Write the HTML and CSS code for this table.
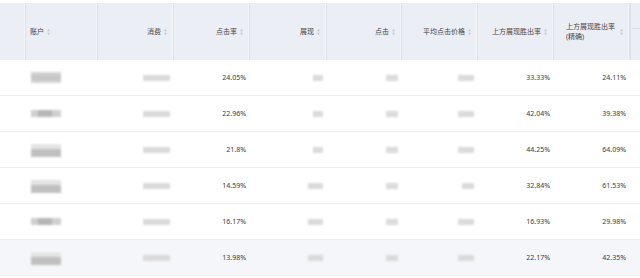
FILE: index.html
```html
<!DOCTYPE html>
<html lang="zh">
<head>
<meta charset="utf-8">
<link rel="stylesheet" href="styles.css">
</head>
<body>
<div class="table">
  <div class="row head">
    <div class="hc"></div>
    <div class="hc left"><span>账户</span><svg class="sort" viewBox="0 0 4 8"><path d="M2 0 L4 3 L0 3Z M2 8 L4 5 L0 5Z"/></svg></div>
    <div class="hc"><span>消费</span><svg class="sort" viewBox="0 0 4 8"><path d="M2 0 L4 3 L0 3Z M2 8 L4 5 L0 5Z"/></svg></div>
    <div class="hc"><span>点击率</span><svg class="sort" viewBox="0 0 4 8"><path d="M2 0 L4 3 L0 3Z M2 8 L4 5 L0 5Z"/></svg></div>
    <div class="hc"><span>展现</span><svg class="sort" viewBox="0 0 4 8"><path d="M2 0 L4 3 L0 3Z M2 8 L4 5 L0 5Z"/></svg></div>
    <div class="hc"><span>点击</span><svg class="sort" viewBox="0 0 4 8"><path d="M2 0 L4 3 L0 3Z M2 8 L4 5 L0 5Z"/></svg></div>
    <div class="hc"><span>平均点击价格</span><svg class="sort" viewBox="0 0 4 8"><path d="M2 0 L4 3 L0 3Z M2 8 L4 5 L0 5Z"/></svg></div>
    <div class="hc"><span>上方展现胜出率</span><svg class="sort" viewBox="0 0 4 8"><path d="M2 0 L4 3 L0 3Z M2 8 L4 5 L0 5Z"/></svg></div>
    <div class="hc"><span class="two">上方展现胜出率<br>(精确)</span><svg class="sort wide" viewBox="0 0 4 8"><path d="M2 0 L4 3 L0 3Z M2 8 L4 5 L0 5Z"/></svg></div>
    <div class="hc edge"><div class="edge-top"></div></div>
  </div>

  <div class="row">
    <div class="c"></div>
    <div class="c left"><span class="acc a1"></span></div>
    <div class="c"><span class="blur w27"></span></div>
    <div class="c">24.05%</div>
    <div class="c"><span class="blur w11"></span></div>
    <div class="c"><span class="blur w13"></span></div>
    <div class="c"><span class="blur w17"></span></div>
    <div class="c">33.33%</div>
    <div class="c">24.11%</div>
    <div class="c"></div>
  </div>
  <div class="row">
    <div class="c"></div>
    <div class="c left"><span class="acc a2"></span></div>
    <div class="c"><span class="blur w27"></span></div>
    <div class="c">22.96%</div>
    <div class="c"><span class="blur w11"></span></div>
    <div class="c"><span class="blur w13"></span></div>
    <div class="c"><span class="blur w17"></span></div>
    <div class="c">42.04%</div>
    <div class="c">39.38%</div>
    <div class="c"></div>
  </div>
  <div class="row">
    <div class="c"></div>
    <div class="c left"><span class="acc a3"></span></div>
    <div class="c"><span class="blur w27"></span></div>
    <div class="c">21.8%</div>
    <div class="c"><span class="blur w11"></span></div>
    <div class="c"><span class="blur w13"></span></div>
    <div class="c"><span class="blur w17"></span></div>
    <div class="c">44.25%</div>
    <div class="c">64.09%</div>
    <div class="c"></div>
  </div>
  <div class="row">
    <div class="c"></div>
    <div class="c left"><span class="acc a3"></span></div>
    <div class="c"><span class="blur w27"></span></div>
    <div class="c">14.59%</div>
    <div class="c"><span class="blur w15"></span></div>
    <div class="c"><span class="blur w13"></span></div>
    <div class="c"><span class="blur w13"></span></div>
    <div class="c">32.84%</div>
    <div class="c">61.53%</div>
    <div class="c"></div>
  </div>
  <div class="row">
    <div class="c"></div>
    <div class="c left"><span class="acc a2"></span></div>
    <div class="c"><span class="blur w27"></span></div>
    <div class="c">16.17%</div>
    <div class="c"><span class="blur w15"></span></div>
    <div class="c"><span class="blur w13"></span></div>
    <div class="c"><span class="blur w17"></span></div>
    <div class="c">16.93%</div>
    <div class="c">29.98%</div>
    <div class="c"></div>
  </div>
  <div class="row hl">
    <div class="c"></div>
    <div class="c left"><span class="acc a3"></span></div>
    <div class="c"><span class="blur w27"></span></div>
    <div class="c">13.98%</div>
    <div class="c"><span class="blur w15"></span></div>
    <div class="c"><span class="blur w13"></span></div>
    <div class="c"><span class="blur w17"></span></div>
    <div class="c">22.17%</div>
    <div class="c">42.35%</div>
    <div class="c"></div>
  </div>
</div>
</body>
</html>
```

FILE: styles.css
```css
html, body {
  margin: 0;
  padding: 0;
  background: #ffffff;
}
body {
  font-family: "Noto Sans", "Noto Sans CJK SC", sans-serif;
  font-size: 7px;
  color: #333;
  padding-top: 3px;
  overflow: hidden;
}
.table {
  width: 640px;
}
.row {
  display: grid;
  grid-template-columns: 26px 72px 76px 76px 77px 75px 76px 76px 76px 10px;
  height: 35px;
  border-bottom: 1px solid #eef0f4;
}
.row.head {
  height: 57px;
  border-bottom: none;
  background: #eceef5;
}
.row.hl {
  background: #f5f6fa;
}
.hc {
  display: flex;
  align-items: center;
  justify-content: flex-end;
  padding-right: 6px;
  border-right: 1px solid #e0e1e8;
  box-shadow: inset -1px 0 0 #f4f5f9;
  color: #444;
  white-space: nowrap;
  line-height: 9px;
}
.hc.left {
  justify-content: flex-start;
  padding-left: 4px;
  padding-right: 0;
}
.hc.edge {
  border-right: none;
  box-shadow: inset 1px 0 0 #e0e1e8;
  padding: 0;
  display: block;
}
.edge-top {
  height: 25px;
  border-bottom: 1px solid #dcdde4;
  margin-left: 2px;
}
.two {
  text-align: left;
  line-height: 10px;
}
.sort {
  width: 3px;
  height: 6px;
  margin-left: 3px;
  fill: #c4c5cc;
  flex: none;
}
.sort.wide {
  margin-left: 5px;
}
.c {
  display: flex;
  align-items: center;
  justify-content: flex-end;
  padding-right: 4px;
  color: #3a3a3a;
}
.c.left {
  justify-content: flex-start;
  padding-left: 5px;
  padding-right: 0;
}
.blur {
  display: inline-block;
  height: 6px;
  background: #dadada;
  filter: blur(1.3px);
}
.w11 { width: 10px; }
.w13 { width: 12px; }
.w15 { width: 15px; }
.w17 { width: 16px; }
.w27 { width: 27px; }
.acc {
  display: inline-block;
  width: 30px;
  filter: blur(1.3px);
}
.a1 {
  height: 11px;
  background: linear-gradient(#d6d6d6, #c4c4c4 60%, #dadada);
}
.a2 {
  height: 7px;
  background: linear-gradient(90deg, #cfcfcf 0 25%, #b6b6b6 25% 70%, #d0d0d0 70%);
}
.a3 {
  height: 14px;
  background: linear-gradient(#ffffff 0 10%, #e4e4e4 10% 45%, #c0c0c0 45%);
}
```
